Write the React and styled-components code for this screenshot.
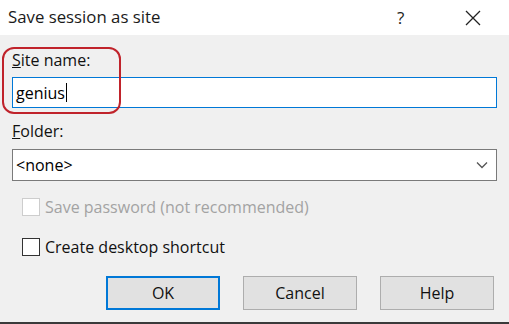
import React from 'react';
import styled, { createGlobalStyle } from 'styled-components';

const Global = createGlobalStyle`
  html, body {
    margin: 0;
    padding: 0;
    background: #f0f0f0;
  }
  * {
    box-sizing: border-box;
  }
`;

const Dialog = styled.div`
  width: 509px;
  height: 324px;
  display: flex;
  flex-direction: column;
  font-family: "Open Sans", "Noto Sans", sans-serif;
  color: #000;
  overflow: hidden;
`;

const TitleBar = styled.div`
  height: 35px;
  background: #fff;
  display: flex;
  align-items: center;
  padding-left: 8px;
`;

const Title = styled.div`
  flex: 1;
  font-size: 16.8px;
  color: #1a1a1a;
  margin-top: -2px;
`;

const Help = styled.div`
  width: 20px;
  font-size: 17px;
  color: #222;
  margin-right: 47px;
  margin-top: -1px;
`;

const Close = styled.div`
  width: 18px;
  height: 18px;
  margin-right: 27px;
  display: flex;
  align-items: center;
  justify-content: center;
`;

const Body = styled.div`
  flex: 1;
  position: relative;
  background: #f0f0f0;
  border-bottom: 2px solid #3a3a3a;
  padding: 15px 12px 0 12px;
  display: flex;
  flex-direction: column;
`;

const Highlight = styled.div`
  position: absolute;
  left: 2px;
  top: 12px;
  width: 119px;
  height: 67px;
  border: 2px solid #c0232b;
  border-radius: 12px;
  pointer-events: none;
`;

const Label = styled.div`
  font-size: 16px;
  line-height: 20px;
  color: #111;
  margin-bottom: ${(p) => p.$gap}px;
`;

const TextBox = styled.div`
  height: 31px;
  background: #fff;
  border: 1px solid #0078d7;
  display: flex;
  align-items: center;
  padding-left: 3px;
  font-size: 16px;
`;

const Caret = styled.span`
  display: inline-block;
  width: 1px;
  height: 19px;
  background: #000;
  margin-left: 1px;
`;

const Combo = styled.div`
  height: 32px;
  background: #fff;
  border: 1px solid #7a7a7a;
  display: flex;
  align-items: center;
  justify-content: space-between;
  padding: 0 8px 0 3px;
  font-size: 16px;
`;

const Field = styled.div`
  margin-bottom: ${(p) => p.$gap}px;
`;

const CheckRow = styled.div`
  display: flex;
  align-items: center;
  padding-left: 10px;
  height: 20px;
  margin-bottom: ${(p) => p.$gap}px;
  font-size: 16px;
  color: ${(p) => (p.$disabled ? '#a3a3a3' : '#111')};
`;

const Box = styled.span`
  width: 18px;
  height: 18px;
  border: 1px solid ${(p) => (p.$disabled ? '#cdcdcd' : '#333')};
  background: #fff;
  margin-right: 5px;
`;

const Buttons = styled.div`
  display: flex;
  justify-content: flex-end;
  gap: 23px;
  padding-right: 3px;
`;

const Button = styled.div`
  width: 114px;
  height: 34px;
  background: #e1e1e1;
  border: ${(p) => (p.$default ? '2px solid #0078d7' : '1px solid #adadad')};
  display: flex;
  align-items: center;
  justify-content: center;
  font-size: 16px;
  color: #111;
`;

export default function App() {
  return (
    <>
      <Global />
      <Dialog>
        <TitleBar>
          <Title>Save session as site</Title>
          <Help>?</Help>
          <Close>
            <svg width="16" height="16" viewBox="0 0 16 16">
              <path d="M1 1 L15 15 M15 1 L1 15" stroke="#222" strokeWidth="1.3" fill="none" />
            </svg>
          </Close>
        </TitleBar>
        <Body>
          <Highlight />
          <Label $gap={7}>
            <u>S</u>ite name:
          </Label>
          <Field $gap={13}>
            <TextBox>
              genius<Caret />
            </TextBox>
          </Field>
          <Label $gap={8}>
            <u>F</u>older:
          </Label>
          <Field $gap={16}>
            <Combo>
              <span>&lt;none&gt;</span>
              <svg width="12" height="8" viewBox="0 0 12 8">
                <path d="M1 1.5 L6 6.5 L11 1.5" stroke="#555" strokeWidth="1.3" fill="none" />
              </svg>
            </Combo>
          </Field>
          <CheckRow $disabled $gap={20}>
            <Box $disabled />
            Save password (not recommended)
          </CheckRow>
          <CheckRow $gap={19}>
            <Box />
            Create desktop shortcut
          </CheckRow>
          <Buttons>
            <Button $default>OK</Button>
            <Button>Cancel</Button>
            <Button>Help</Button>
          </Buttons>
        </Body>
      </Dialog>
    </>
  );
}
